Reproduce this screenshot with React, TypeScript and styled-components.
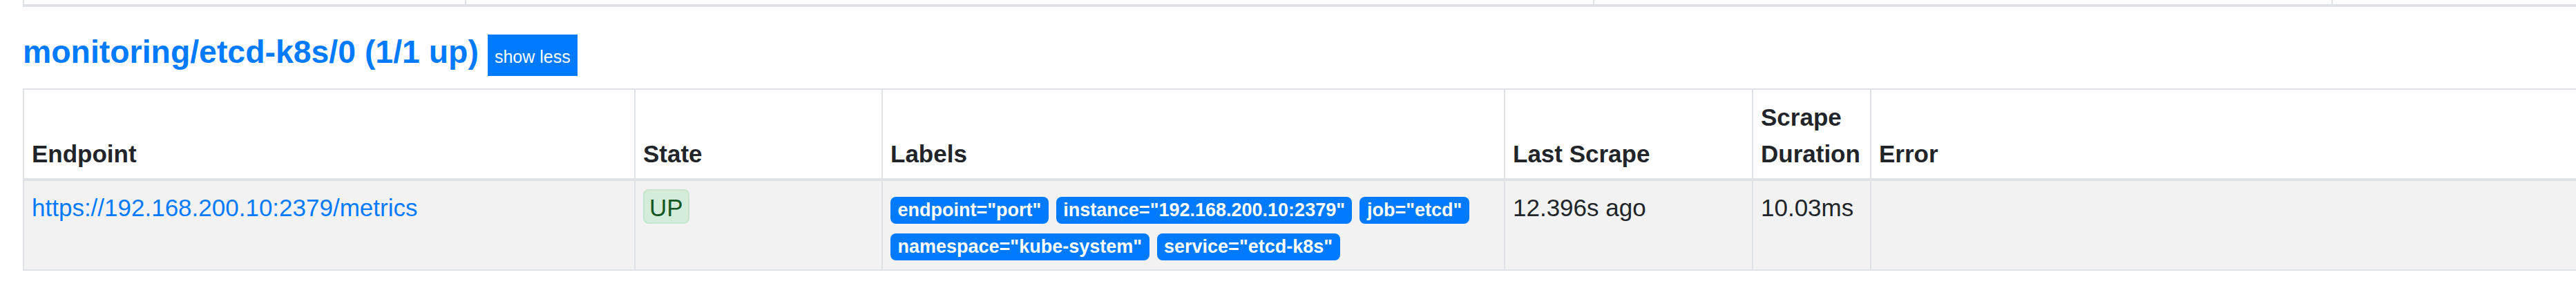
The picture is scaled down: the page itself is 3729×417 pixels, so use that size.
import { createGlobalStyle, styled } from 'styled-components';

const labels = [
  'endpoint="port"',
  'instance="192.168.200.10:2379"',
  'job="etcd"',
  'namespace="kube-system"',
  'service="etcd-k8s"',
];

const prevColumns = [640, 1633, 1069, 418];

const columns = [
  { title: 'Endpoint', width: 885 },
  { title: 'State', width: 358 },
  { title: 'Labels', width: 901 },
  { title: 'Last Scrape', width: 359 },
  { title: 'Scrape Duration', width: 171 },
  { title: 'Error', width: 1086 },
];

function App() {
  return (
    <>
      <GlobalStyle />
      <StPage>
        <StPrevTable>
          <tbody>
            <tr>
              {prevColumns.map((w, i) => (
                <StPrevCell key={i} $width={w} />
              ))}
            </tr>
          </tbody>
        </StPrevTable>

        <StHeadingRow>
          <StH2>monitoring/etcd-k8s/0 (1/1 up)</StH2>
          <StToggleBtn type="button">show less</StToggleBtn>
        </StHeadingRow>

        <StTable>
          <thead>
            <tr>
              {columns.map((col) => (
                <StTh key={col.title} $width={col.width}>
                  {col.title}
                </StTh>
              ))}
            </tr>
          </thead>
          <tbody>
            <StStripedRow>
              <StTd>
                <StLink href="#">https://192.168.200.10:2379/metrics</StLink>
              </StTd>
              <StTd>
                <StState>UP</StState>
              </StTd>
              <StTd>
                {labels.map((label) => (
                  <StLabel key={label}>{label}</StLabel>
                ))}
              </StTd>
              <StTd>12.396s ago</StTd>
              <StTd>10.03ms</StTd>
              <StTd></StTd>
            </StStripedRow>
          </tbody>
        </StTable>
      </StPage>
    </>
  );
}

export default App;

const GlobalStyle = createGlobalStyle`
  html, body {
    margin: 0;
    padding: 0;
    background: #ffffff;
    overflow: hidden;
  }
  body {
    font-family: "Liberation Sans", Arial, sans-serif;
    color: #212529;
  }
`;

const StPage = styled.div`
  padding-left: 33px;
`;

const StPrevTable = styled.table`
  width: 3760px;
  table-layout: fixed;
  border-collapse: separate;
  border-spacing: 0;
`;

const StPrevCell = styled.td<{ $width: number }>`
  box-sizing: border-box;
  width: ${(p) => p.$width}px;
  height: 10px;
  padding: 0;
  border-left: 2px solid #dee2e6;
  border-bottom: 4px solid #dee2e6;
`;

const StHeadingRow = styled.div`
  display: flex;
  align-items: baseline;
  gap: 13px;
  margin: 35px 0 18px;
`;

const StH2 = styled.h2`
  margin: 0;
  font-size: 46.4px;
  line-height: 60px;
  font-weight: 700;
  color: #007bff;
`;

const StToggleBtn = styled.button`
  height: 60px;
  padding: 4px 10px 0;
  border: none;
  border-radius: 0;
  background-color: #007bff;
  color: #ffffff;
  font-family: inherit;
  font-size: 25px;
  line-height: 56px;
  cursor: pointer;
`;

const StTable = styled.table`
  width: 3760px;
  table-layout: fixed;
  border-collapse: separate;
  border-spacing: 0;
  font-size: 35px;
  line-height: 53px;
`;

const StTh = styled.th<{ $width: number }>`
  box-sizing: border-box;
  width: ${(p) => p.$width}px;
  padding: 13px 11px 9px;
  border-top: 2px solid #dee2e6;
  border-left: 2px solid #dee2e6;
  border-bottom: 4px solid #dee2e6;
  text-align: left;
  vertical-align: bottom;
  font-weight: 700;
  color: #212529;
`;

const StStripedRow = styled.tr`
  background-color: #f2f2f2;
`;

const StTd = styled.td`
  box-sizing: border-box;
  padding: 12px 11px 10px;
  border-left: 2px solid #dee2e6;
  border-bottom: 2px solid #dee2e6;
  vertical-align: top;
  color: #212529;
`;

const StLink = styled.a`
  color: #007bff;
  text-decoration: none;
`;

const StState = styled.span`
  display: inline-block;
  padding: 3px 7px 0;
  line-height: 43px;
  border: 2px solid #c3e6cb;
  border-radius: 8px;
  background-color: #d4edda;
  color: #155724;
`;

const StLabel = styled.span`
  display: inline-block;
  margin-right: 11px;
  padding: 6px 10.5px;
  border-radius: 8px;
  background-color: #007bff;
  color: #ffffff;
  font-size: 27px;
  line-height: 1;
  font-weight: 700;
  white-space: nowrap;
`;
